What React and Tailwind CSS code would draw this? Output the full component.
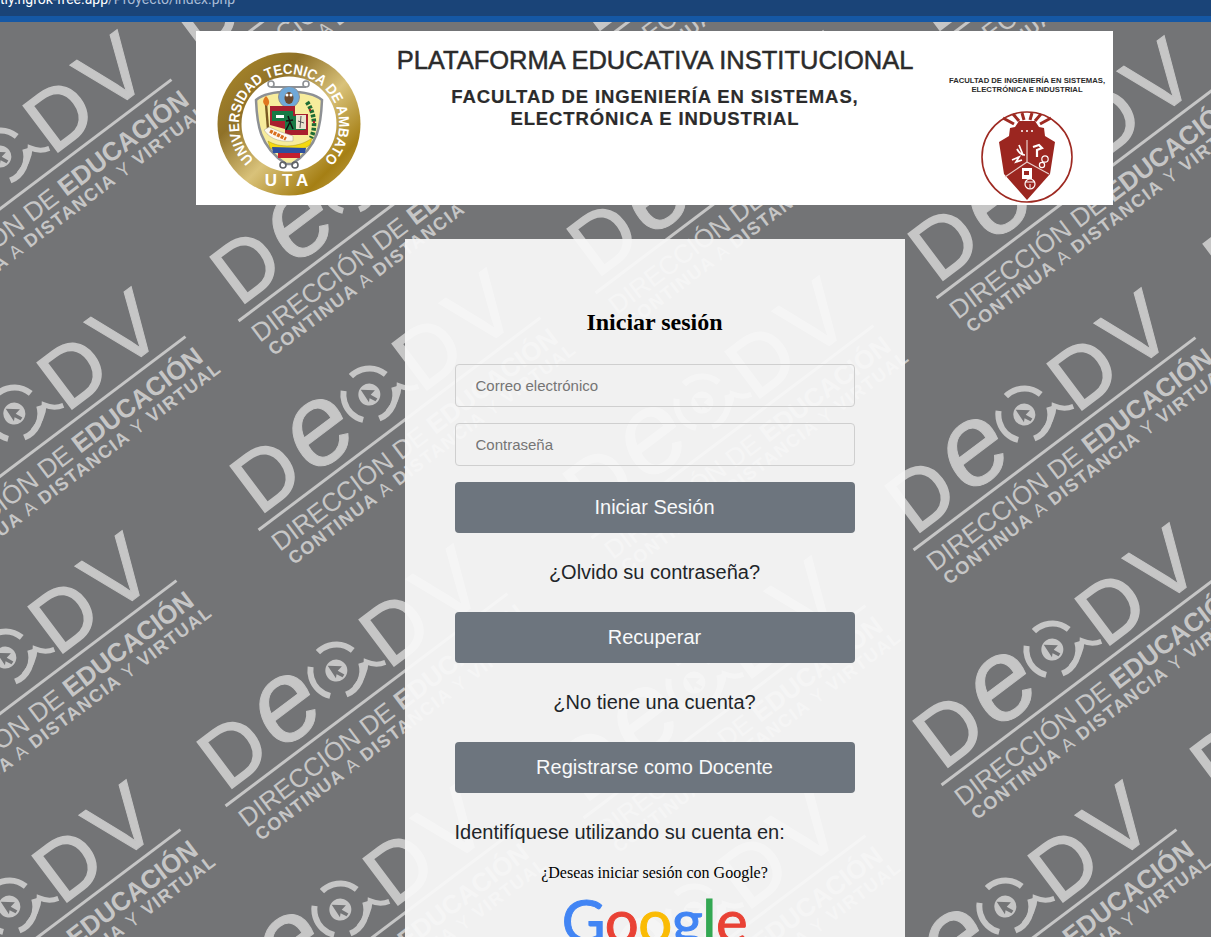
const MARKS = [
  [-104, 274], [-90, 531], [-99, 775], [-95, 1024],
  [205, 52], [245, 303], [265, 512], [232, 788], [236, 1027],
  [600, 30], [602, 275], [598, 520], [590, 800], [590, 1030],
  [940, 30], [943, 280], [920, 532], [948, 767], [901, 1024],
  [1240, 40], [1238, 290], [1255, 540], [1225, 795],
];

const SANS = "'Liberation Sans', Arial, sans-serif";

function Mark({ x, y }) {
  return (
    <g transform={`translate(${x} ${y}) rotate(-37)`} fill="#c6c6c6" fontFamily={SANS}>
      <text x="-7" y="0" fontSize="84" stroke="#c6c6c6" strokeWidth="1.5">D</text>
      <text x="92" y="0" fontSize="114" fontStyle="italic" textAnchor="middle" stroke="#c6c6c6" strokeWidth="1">e</text>
      <circle cx="154" cy="-31" r="26" fill="none" stroke="#c6c6c6" strokeWidth="6" strokeDasharray="38 16.5" transform="rotate(20 154 -31)" />
      <circle cx="154" cy="-31" r="11" />
      <path d="M150 -40 L161 -31 L155 -30 L158 -23 L155 -22 L152 -28 L149 -25 Z" fill="#737476" />
      <path d="M158 -6 C172 -9 178 -14 183 -20 C187 -13 191 -10 198 -8" fill="none" stroke="#c6c6c6" strokeWidth="5" />
      <text x="196" y="0" fontSize="84" stroke="#c6c6c6" strokeWidth="1.5">D</text>
      <text x="264" y="0" fontSize="90" stroke="#c6c6c6" strokeWidth="1">V</text>
      <rect x="-16" y="9" width="353" height="3" />
      <text x="-12" y="41" fontSize="26" textLength="350" lengthAdjust="spacingAndGlyphs">
        DIRECCIÓN DE <tspan fontWeight="700">EDUCACIÓN</tspan>
      </text>
      <text x="-9" y="60" fontSize="18" textLength="354" lengthAdjust="spacing">
        <tspan fontWeight="700">CONTINUA</tspan> A <tspan fontWeight="700">DISTANCIA</tspan> Y <tspan fontWeight="700">VIRTUAL</tspan>
      </text>
    </g>
  );
}

function UtaSeal() {
  return (
    <svg width="146" height="146" viewBox="-73 -73 146 146" className="block">
      <defs>
        <linearGradient id="gold" x1="0" y1="0" x2="1" y2="1">
          <stop offset="0" stopColor="#b08d2a" />
          <stop offset="0.3" stopColor="#8f7128" />
          <stop offset="0.55" stopColor="#d9c27a" />
          <stop offset="0.8" stopColor="#a57f14" />
          <stop offset="1" stopColor="#c9ad5c" />
        </linearGradient>
        <path id="sealTop" d="M0 50 A50 50 0 1 1 0.01 50" />
      </defs>
      <circle r="71.5" fill="url(#gold)" />
      <circle r="47.5" fill="#fff" />
      <text fontFamily={SANS} fontWeight="700" fontSize="14.5" fill="#fff">
        <textPath href="#sealTop" startOffset="50%" textAnchor="middle" textLength="236" lengthAdjust="spacingAndGlyphs">UNIVERSIDAD TECNICA DE AMBATO</textPath>
      </text>
      <text y="62" textAnchor="middle" fontFamily={SANS} fontWeight="700" fontSize="17" letterSpacing="5" fill="#fff">UTA</text>
      {/* shield */}
      <path d="M-33 -24 C-32 0 -30 22 -3 40 L3 40 C30 22 32 0 33 -24 C20 -35 -20 -35 -33 -24 Z" fill="#f7ec9c" stroke="#8d9094" strokeWidth="2.5" />
      <circle cx="-6" cy="41" r="3" fill="none" stroke="#5f6266" strokeWidth="1.6" />
      <circle cx="6" cy="41" r="3" fill="none" stroke="#5f6266" strokeWidth="1.6" />
      <circle cx="-18" cy="-40" r="3" fill="none" stroke="#8d9094" strokeWidth="1.6" />
      <circle cx="17" cy="-40" r="3" fill="none" stroke="#8d9094" strokeWidth="1.6" />
      <path d="M-18 -37 L17 -37" stroke="#8d9094" strokeWidth="2" />
      <circle cy="-27" r="10.5" fill="#6fa8d8" stroke="#8d9094" />
      <ellipse cy="-26" rx="4.5" ry="6" fill="#6b4a2f" />
      <circle cx="-2" cy="-29" r="1.5" fill="#fff" />
      <circle cx="2" cy="-29" r="1.5" fill="#fff" />
      {/* coat panels */}
      <path d="M-19 -18 L6 -18 L6 -10 L19 -10 L19 11 L-4 11 L-4 5 L-19 1 Z" fill="#a81f2f" />
      <path d="M-17 -13 L4 -13 L4 -3 L-17 -3 Z" fill="#177a45" />
      <path d="M-4 -8 L16 -8 L16 6 L-4 6 Z" fill="#177a45" />
      <path d="M7 -9 L17 -9 L17 5 L7 5 Z" fill="#e9e4cf" />
      <path d="M-13 -9 h8 v3 h-8 Z" fill="#fff" />
      <path d="M-1 -8 L1 -2 L-3 6 M1 -2 L4 5 M-3 -3 L4 -4" stroke="#111" strokeWidth="1.5" fill="none" />
      <path d="M12 -8 L11 4 M9 -3 L15 -1" stroke="#555" strokeWidth="1" fill="none" />
      {/* torch and laurel */}
      <path d="M-23 -20 L-21 5" stroke="#7a5a22" strokeWidth="2.4" />
      <path d="M-23 -28 C-19 -24 -19 -20 -22 -18 C-27 -20 -27 -24 -23 -28 Z" fill="#e0761f" />
      <path d="M18 -22 C26 -10 27 4 22 14" fill="none" stroke="#1f6b35" strokeWidth="4.5" strokeDasharray="3 1.5" />
      <circle cx="21" cy="-14" r="1.2" fill="#b3202a" />
      <circle cx="25" cy="-2" r="1.2" fill="#b3202a" />
      {/* cornucopia */}
      <path d="M-25 6 C-18 17 -5 18 4 17 L4 12 L-8 8 L-20 3 Z" fill="#fdfaf0" stroke="#a9a08a" strokeWidth="0.5" />
      <path d="M-19 7 L-3 15" stroke="#d9701f" strokeWidth="3.6" strokeDasharray="3 1" />
      {/* flag */}
      <path d="M-21 17 C-10 24 10 24 23 14 L21 21 C10 29 -10 29 -19 24 Z" fill="#f5d90f" stroke="#8d7d1e" strokeWidth="0.4" />
      <path d="M-17 23 L17 24 L16 29 L-16 29 Z" fill="#2d4f9e" />
      <path d="M-11 29 L11 29 L11 34 L-11 34 Z" fill="#c21f2e" />
    </svg>
  );
}

function FacultyShield() {
  return (
    <svg width="94" height="94" viewBox="-47 -47 94 94" className="block">
      <circle r="45" fill="#fff" stroke="#9e2a22" strokeWidth="1.6" />
      <g stroke="#9e2a22" strokeWidth="3">
        <path d="M-8 -36 L-14 -43" />
        <path d="M-13 -33 L-24 -39" />
        <path d="M-3 -37 L-5 -44" />
        <path d="M3 -37 L5 -44" />
        <path d="M8 -36 L14 -43" />
        <path d="M13 -33 L24 -39" />
      </g>
      <path d="M-8 -36 L8 -36 L12 -30 L17 -29 L18 -21 L28 -15 L23 17 L0 43 L-23 17 L-28 -15 L-18 -21 L-17 -29 L-12 -30 Z" fill="#9b2620" />
      <circle cx="-5" cy="-26" r="1" fill="#fff" />
      <circle cx="0" cy="-26" r="1" fill="#fff" />
      <circle cx="5" cy="-26" r="1" fill="#fff" />
      <path d="M0 -17 L0 5 M0 5 L-22 20 M0 5 L22 17" stroke="#e9cfcb" strokeWidth="1.2" fill="none" />
      <path d="M-8 -12 L-4 -2 M-10 -8 C-8 -4 -5 -2 -2 -2 M-15 3 L-8 0 L-11 5 L-5 3" stroke="#fff" strokeWidth="1.7" fill="none" />
      <path d="M6 -10 L12 -12 L15 -9 L10 -7 L10 0" stroke="#fff" strokeWidth="2.2" fill="none" />
      <circle cx="18" cy="2" r="3.2" fill="none" stroke="#fff" strokeWidth="1.2" />
      <circle cx="15" cy="8" r="2.6" fill="none" stroke="#fff" strokeWidth="1.2" />
      <rect x="-5" y="11" width="10" height="11" fill="#fff" />
      <rect x="-3" y="14" width="5" height="4" fill="#9b2620" />
      <circle cx="3" cy="27" r="5" fill="none" stroke="#fff" strokeWidth="1.2" />
      <path d="M-1 25 L7 25 M3 27 L3 32" stroke="#fff" strokeWidth="1" />
    </svg>
  );
}

function DarkButton({ children }) {
  return (
    <button className="block h-[51px] w-full rounded bg-[#656e77]/95 pb-[2px] text-[20px] text-[#f8f9fa]">
      {children}
    </button>
  );
}

export default function App() {
  return (
    <div className="relative h-[937px] overflow-hidden bg-[#737476] font-['Liberation_Sans',Arial,sans-serif]">
      <svg className="absolute inset-0 h-full w-full" width="1211" height="937">
        {MARKS.map(([x, y]) => <Mark key={`${x}-${y}`} x={x} y={y} />)}
      </svg>

      <div className="relative">
        {/* browser chrome strip left in the capture */}
        <div className="h-[16px] overflow-hidden bg-[#1a4478]">
          <p className="-mt-[11px] font-['Roboto',sans-serif] text-[14px] leading-[20px] text-[#a9bcd6]">
            <span className="text-white">tly.ngrok-free.app</span>/Proyecto/index.php
          </p>
        </div>
        <div className="h-[6px] bg-[#1558a5]" />

        {/* the page was laid out wider than the captured window */}
        <div className="w-[1309px]">
          <header className="mx-auto mt-[9px] flex h-[174px] w-[917px] bg-white text-[#2b2b2b]">
            <div className="ml-[20px] mt-[20px] shrink-0"><UtaSeal /></div>
            <div className="ml-[33px] w-[520px] shrink-0 pt-[14px] text-center">
              <h1 className="text-[25.5px] leading-[30px] [-webkit-text-stroke:0.5px_#2b2b2b]">PLATAFORMA EDUCATIVA INSTITUCIONAL</h1>
              <h2 className="mt-[11px] text-[18.5px] font-bold leading-[22px] tracking-[0.9px] [-webkit-text-stroke:0.2px_#2b2b2b]">
                FACULTAD DE INGENIERÍA EN SISTEMAS,<br />ELECTRÓNICA E INDUSTRIAL
              </h2>
            </div>
            <div className="ml-[32px] flex flex-col items-center pt-[46px]">
              <p className="w-[160px] text-center text-[7.7px] font-bold leading-[8.5px]">
                FACULTAD DE INGENIERÍA EN SISTEMAS,<br />ELECTRÓNICA E INDUSTRIAL
              </p>
              <div className="mt-[16px]"><FacultyShield /></div>
            </div>
          </header>

          <main className="mx-auto mt-[34px] w-[500px] bg-[#f8f8f8]/95 px-[50px] pb-[40px] pt-[69px] text-[#212529]">
            <h3 className="mb-[28px] text-center font-['Liberation_Serif',serif] text-[24px] font-bold leading-[28px] text-black">Iniciar sesión</h3>
            <input placeholder="Correo electrónico" className="mb-4 block h-[43px] w-full rounded border border-[#cfcfcf] bg-transparent px-[20px] text-[15px] outline-none placeholder:text-[#757575]" />
            <input placeholder="Contraseña" className="mb-4 block h-[43px] w-full rounded border border-[#cfcfcf] bg-transparent px-[20px] text-[15px] outline-none placeholder:text-[#757575]" />
            <DarkButton>Iniciar Sesión</DarkButton>
            <p className="mb-[25px] mt-[24px] text-center text-[20px] leading-[30px]">¿Olvido su contraseña?</p>
            <DarkButton>Recuperar</DarkButton>
            <p className="mb-[25px] mt-[24px] text-center text-[20px] leading-[30px]">¿No tiene una cuenta?</p>
            <DarkButton>Registrarse como Docente</DarkButton>
            <p className="mt-[24px] text-[20px] leading-[30px]">Identifíquese utilizando su cuenta en:</p>
            <p className="mt-[14px] text-center font-['Liberation_Serif',serif] text-[16px] leading-[24px] text-black">¿Deseas iniciar sesión con Google?</p>
            <p className="mt-[5px] text-center font-['Lato',sans-serif] text-[60px] leading-[60px] tracking-[-0.5px] [-webkit-text-stroke:1px_currentColor]">
              <span className="text-[#4285f4]">G</span>
              <span className="text-[#e94235]">o</span>
              <span className="text-[#fabb05]">o</span>
              <span className="text-[#4285f4]">g</span>
              <span className="text-[#34a853]">l</span>
              <span className="text-[#e94235]">e</span>
            </p>
          </main>
        </div>
      </div>
    </div>
  );
}
